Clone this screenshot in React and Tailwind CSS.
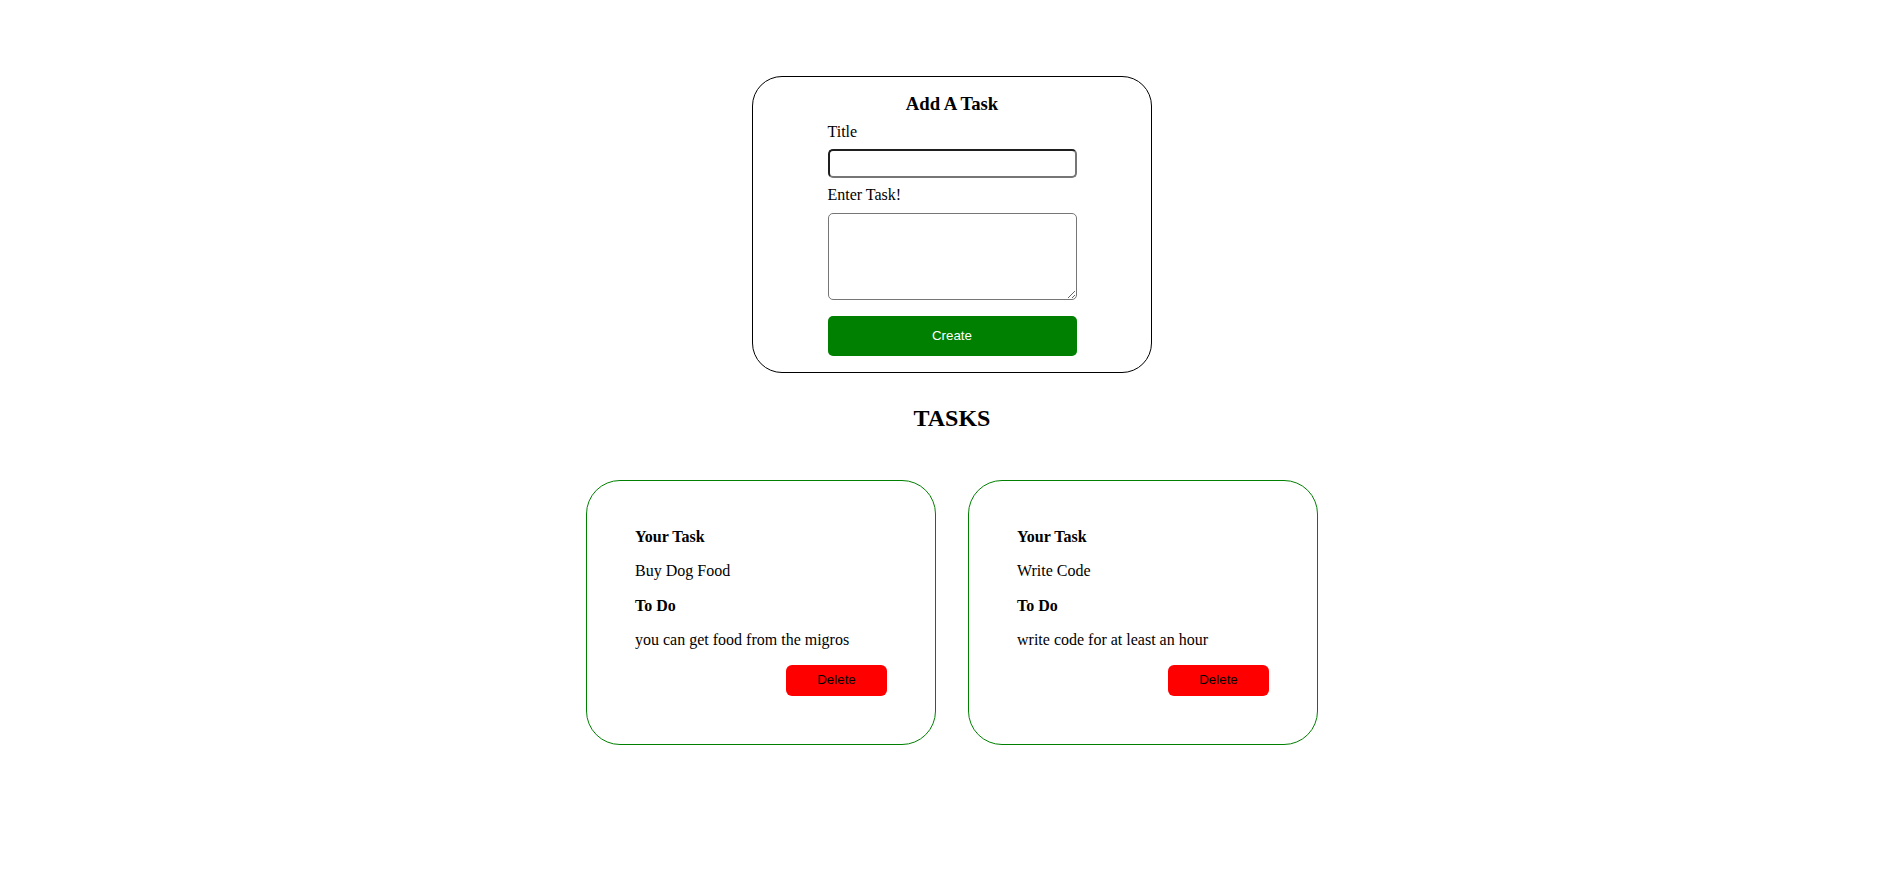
import { useState } from "react";

const serif = "font-['Liberation_Serif','Times_New_Roman',serif]";
const sans = "font-['Liberation_Sans',Arial,sans-serif]";

const INITIAL = [
  { id: 1, title: "Buy Dog Food", body: "you can get food from the migros" },
  { id: 2, title: "Write Code", body: "write code for at least an hour" },
];

export default function App() {
  const [tasks, setTasks] = useState(INITIAL);
  const [title, setTitle] = useState("");
  const [body, setBody] = useState("");

  const create = (e) => {
    e.preventDefault();
    if (!title.trim()) return;
    setTasks((t) => [...t, { id: Date.now(), title, body }]);
    setTitle("");
    setBody("");
  };

  const remove = (id) => setTasks((t) => t.filter((x) => x.id !== id));

  return (
    <div className={`${serif} min-h-[886px] bg-white pl-[22px] pt-[76px] text-black`}>
      {/* form card */}
      <form
        onSubmit={create}
        className="mx-auto w-[400px] rounded-[30px] border border-black pt-[16px] pb-[16px]"
      >
        <h3 className="text-center text-[18.72px] font-bold leading-[21.5px]">Add A Task</h3>
        <div className="mx-auto mt-[8px] flex w-[249px] flex-col">
          <label className="text-[16px] leading-[18.4px]">Title</label>
          <input
            value={title}
            onChange={(e) => setTitle(e.target.value)}
            className="mt-[8px] h-[29px] w-full rounded-[5px] border-2 border-t-[#1f1f1f] border-l-[#1f1f1f] border-r-[#767676] border-b-[#767676] px-1 text-[13px] outline-none"
          />
          <label className="mt-[8px] text-[16px] leading-[18.4px]">Enter Task!</label>
          <textarea
            value={body}
            onChange={(e) => setBody(e.target.value)}
            className="mt-[9px] h-[87px] w-full rounded-[5px] border border-[#767676] px-1 text-[13px] outline-none"
          />
          <button
            type="submit"
            className={`${sans} mt-[16px] h-[40px] w-full rounded-[5px] bg-[#008000] text-[13.33px] text-white`}
          >
            Create
          </button>
        </div>
      </form>

      <h2 className="mt-[32px] text-center text-[24px] font-bold leading-[27.6px]">TASKS</h2>

      {/* task list */}
      <div className="mt-[47px] flex items-start justify-center gap-[32px]">
        {tasks.map((t) => (
          <div
            key={t.id}
            className="w-[350px] rounded-[34px] border border-[#008000] px-[48px] pt-[31px] pb-[48px]"
          >
            <p className="my-4 text-[16px] font-bold leading-[18.4px]">Your Task</p>
            <p className="my-4 text-[16px] leading-[18.4px]">{t.title}</p>
            <p className="my-4 text-[16px] font-bold leading-[18.4px]">To Do</p>
            <p className="mt-4 text-[16px] leading-[18.4px]">{t.body}</p>
            <div className="mt-[15px] flex justify-end">
              <button
                onClick={() => remove(t.id)}
                className={`${sans} h-[31px] w-[101px] rounded-[6px] bg-[#ff0000] text-[13.33px] text-black`}
              >
                Delete
              </button>
            </div>
          </div>
        ))}
      </div>
    </div>
  );
}
